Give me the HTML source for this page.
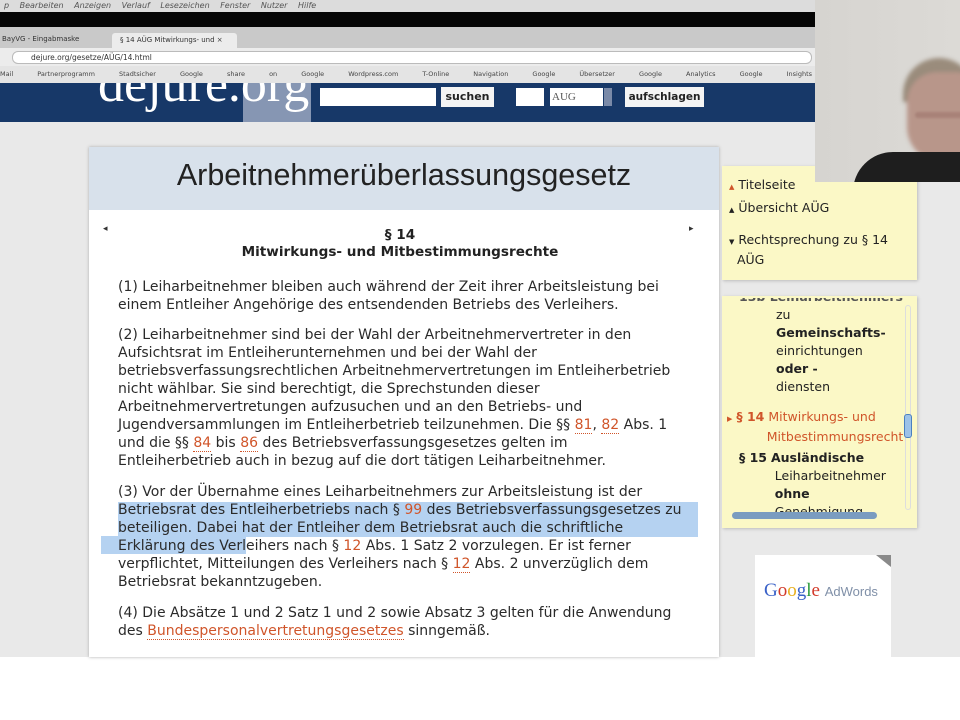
<!DOCTYPE html>
<html><head><meta charset="utf-8"><style>
*{margin:0;padding:0;box-sizing:border-box}
body{width:960px;height:720px;overflow:hidden;background:#fff;position:relative;font-family:"DejaVu Sans","Liberation Sans",sans-serif}
.a{position:absolute}
.t{position:absolute;left:118px;font-size:14px;color:#2a2a2a;white-space:nowrap;line-height:18px}
.r{color:#d0552a}
.u{color:#d0552a;border-bottom:1px dotted #d0552a}
.sb{position:absolute;font-size:12.5px;color:#222;white-space:nowrap}
</style></head><body>
<div class="a" style="left:0;top:122px;width:960px;height:535px;background:#e9e9e9"></div>
<div class="a" style="left:0;top:0;width:820px;height:12px;background:#dcdcdc;font-size:8px;color:#555;font-style:italic;line-height:12px;padding-left:4px;word-spacing:8px">p Bearbeiten Anzeigen Verlauf Lesezeichen Fenster Nutzer Hilfe</div>
<div class="a" style="left:0;top:12px;width:820px;height:15px;background:#050505"></div>
<div class="a" style="left:0;top:27px;width:820px;height:21px;background:#c9c9c9"></div>
<div class="a" style="left:0;top:35px;width:100px;height:13px;font-size:7px;color:#333;padding-left:2px">BayVG - Eingabmaske</div>
<div class="a" style="left:112px;top:33px;width:125px;height:15px;background:#ececec;border-radius:3px 3px 0 0;font-size:7px;color:#333;padding:3px 0 0 8px">§ 14 AÜG Mitwirkungs- und ×</div>
<div class="a" style="left:0;top:48px;width:820px;height:18px;background:#ececec"></div>
<div class="a" style="left:12px;top:51px;width:800px;height:13px;background:#fff;border:1px solid #bbb;border-radius:6px;font-size:7.5px;color:#333;padding-left:18px;line-height:11px">dejure.org/gesetze/AÜG/14.html</div>
<div class="a" style="left:0;top:66px;width:820px;height:17px;background:#e4e4e4;font-size:6.5px;color:#444;line-height:17px;word-spacing:22px;white-space:nowrap;overflow:hidden">Mail Partnerprogramm Stadtsicher Google share on Google Wordpress.com T-Online Navigation Google Übersetzer Google Analytics Google Insights Greasebox</div>
<div class="a" style="left:0;top:83px;width:815px;height:39px;background:#173868"></div>
<div class="a" style="left:243px;top:83px;width:68px;height:39px;background:#8696b3"></div>
<div class="a" style="left:0;top:83px;width:815px;height:39px;overflow:hidden">
<div class="a" style="left:98px;top:-24px;font-family:'Liberation Serif',serif;font-size:52px;color:#fff;line-height:52px">dejure.org</div></div>
<div class="a" style="left:320px;top:88px;width:116px;height:18px;background:#fff"></div>
<div class="a" style="left:441px;top:87px;width:53px;height:20px;background:#f4f4f4;font-size:11px;font-weight:bold;color:#222;text-align:center;line-height:20px">suchen</div>
<div class="a" style="left:516px;top:88px;width:28px;height:18px;background:#fff"></div>
<div class="a" style="left:550px;top:88px;width:53px;height:18px;background:#fff;font-size:11px;color:#555;padding-left:2px;line-height:18px;font-family:'Liberation Serif',serif">AUG</div>
<div class="a" style="left:604px;top:88px;width:8px;height:18px;background:#7a8aa8"></div>
<div class="a" style="left:625px;top:87px;width:79px;height:20px;background:#f4f4f4;font-size:10.5px;font-weight:bold;color:#222;text-align:center;line-height:20px">aufschlagen</div>
<div class="a" style="left:89px;top:147px;width:630px;height:510px;background:#fff;box-shadow:0 0 3px #aaa"></div>
<div class="a" style="left:89px;top:147px;width:630px;height:63px;background:#d8e1eb"></div>
<div class="a" style="left:89px;top:158px;width:630px;text-align:center;font-family:'Liberation Sans',sans-serif;font-size:30.5px;color:#222">Arbeitnehmerüberlassungsgesetz</div>
<div class="a" style="left:103px;top:224px;font-size:9px;color:#333">◂</div>
<div class="a" style="left:689px;top:224px;font-size:9px;color:#333">▸</div>
<div class="a" style="left:89px;top:227px;width:622px;text-align:center;font-size:13.6px;font-weight:bold;color:#222;line-height:17px">§ 14<br>Mitwirkungs- und Mitbestimmungsrechte</div>
<div class="a" style="left:118px;top:502px;width:580px;height:35px;background:#b5d2f1"></div>
<div class="a" style="left:101px;top:536px;width:145px;height:18px;background:#b5d2f1"></div>
<div class="t" style="top:278px">(1) Leiharbeitnehmer bleiben auch während der Zeit ihrer Arbeitsleistung bei</div>
<div class="t" style="top:296px">einem Entleiher Angehörige des entsendenden Betriebs des Verleihers.</div>
<div class="t" style="top:326px">(2) Leiharbeitnehmer sind bei der Wahl der Arbeitnehmervertreter in den</div>
<div class="t" style="top:344px">Aufsichtsrat im Entleiherunternehmen und bei der Wahl der</div>
<div class="t" style="top:362px">betriebsverfassungsrechtlichen Arbeitnehmervertretungen im Entleiherbetrieb</div>
<div class="t" style="top:380px">nicht wählbar. Sie sind berechtigt, die Sprechstunden dieser</div>
<div class="t" style="top:398px">Arbeitnehmervertretungen aufzusuchen und an den Betriebs- und</div>
<div class="t" style="top:416px">Jugendversammlungen im Entleiherbetrieb teilzunehmen. Die §§ <span class="u">81</span>, <span class="u">82</span> Abs. 1</div>
<div class="t" style="top:434px">und die §§ <span class="u">84</span> bis <span class="u">86</span> des Betriebsverfassungsgesetzes gelten im</div>
<div class="t" style="top:452px">Entleiherbetrieb auch in bezug auf die dort tätigen Leiharbeitnehmer.</div>
<div class="t" style="top:483px">(3) Vor der Übernahme eines Leiharbeitnehmers zur Arbeitsleistung ist der</div>
<div class="t" style="top:501px">Betriebsrat des Entleiherbetriebs nach § <span class="r">99</span> des Betriebsverfassungsgesetzes zu</div>
<div class="t" style="top:519px">beteiligen. Dabei hat der Entleiher dem Betriebsrat auch die schriftliche</div>
<div class="t" style="top:537px">Erklärung des Verleihers nach § <span class="r">12</span> Abs. 1 Satz 2 vorzulegen. Er ist ferner</div>
<div class="t" style="top:555px">verpflichtet, Mitteilungen des Verleihers nach § <span class="u">12</span> Abs. 2 unverzüglich dem</div>
<div class="t" style="top:573px">Betriebsrat bekanntzugeben.</div>
<div class="t" style="top:604px">(4) Die Absätze 1 und 2 Satz 1 und 2 sowie Absatz 3 gelten für die Anwendung</div>
<div class="t" style="top:622px">des <span class="u">Bundespersonalvertretungsgesetzes</span> sinngemäß.</div>
<div class="a" style="left:722px;top:166px;width:195px;height:114px;background:#fbf8c6;box-shadow:1px 1px 3px #bbb"></div>
<div class="sb" style="left:729px;top:177px"><span style="color:#d0552a;font-size:7px">▲</span> Titelseite</div>
<div class="sb" style="left:729px;top:200px"><span style="font-size:7px">▲</span> Übersicht AÜG</div>
<div class="sb" style="left:729px;top:231px;line-height:18px"><span style="font-size:7px">▼</span> Rechtsprechung zu § 14<br>&nbsp;&nbsp;AÜG</div>
<div class="a" style="left:722px;top:296px;width:195px;height:232px;background:#fbf8c6;box-shadow:1px 1px 3px #bbb;overflow:hidden"></div>
<div class="a" style="left:722px;top:298px;width:185px;height:218px;overflow:hidden">
<div class="sb" style="left:17px;top:-9px;font-weight:bold;color:#555">13b Leiharbeitnehmers</div>
<div class="sb" style="left:54px;top:8px;line-height:18px">zu<br><b>Gemeinschafts-</b><br>einrichtungen<br><b>oder -</b><br>diensten</div>
<div class="sb" style="left:5px;top:110px;line-height:18px;color:#d0552a"><span style="font-size:7px">▶</span> <b>§ 14</b> Mitwirkungs- und<br>&nbsp;&nbsp;&nbsp;&nbsp;&nbsp;&nbsp;&nbsp;&nbsp;&nbsp;&nbsp;Mitbestimmungsrecht</div>
<div class="sb" style="left:17px;top:151px;line-height:18px"><b>§ 15</b> <b>Ausländische</b><br>&nbsp;&nbsp;&nbsp;&nbsp;&nbsp;&nbsp;&nbsp;&nbsp;&nbsp;Leiharbeitnehmer<br>&nbsp;&nbsp;&nbsp;&nbsp;&nbsp;&nbsp;&nbsp;&nbsp;&nbsp;<b>ohne</b><br>&nbsp;&nbsp;&nbsp;&nbsp;&nbsp;&nbsp;&nbsp;&nbsp;&nbsp;Genehmigung</div>
</div>
<div class="a" style="left:905px;top:305px;width:6px;height:205px;border:1px solid #ddd;border-radius:3px"></div>
<div class="a" style="left:904px;top:414px;width:8px;height:24px;background:#9cc2e8;border:1px solid #4a80c0;border-radius:3px"></div>
<div class="a" style="left:732px;top:512px;width:145px;height:7px;background:#7a9cc0;border-radius:4px"></div>
<div class="a" style="left:755px;top:555px;width:136px;height:102px;background:#fff"></div>
<div class="a" style="left:876px;top:555px;width:15px;height:12px;background:#8a8a8a;clip-path:polygon(0 0,100% 0,100% 100%)"></div>
<div class="a" style="left:764px;top:580px;font-family:'Liberation Serif',serif;font-size:19px;white-space:nowrap"><span style="color:#3a62c8">G</span><span style="color:#d23a2a">o</span><span style="color:#e8b020">o</span><span style="color:#3a62c8">g</span><span style="color:#2a9a3a">l</span><span style="color:#d23a2a">e</span> <span style="font-family:'Liberation Sans',sans-serif;font-size:13px;color:#8090a8">AdWords</span></div>
<div class="a" style="left:815px;top:0;width:145px;height:182px;background:linear-gradient(90deg,#d6d4d0,#dcdad6);overflow:hidden">
<div class="a" style="left:88px;top:58px;width:72px;height:44px;background:#9a8c7c;border-radius:36px 36px 0 0;filter:blur(2px)"></div>
<div class="a" style="left:92px;top:72px;width:70px;height:90px;background:#b8968a;border-radius:30px 20px 30px 35px;filter:blur(2px)"></div>
<div class="a" style="left:100px;top:112px;width:50px;height:6px;background:#a88278;border-radius:4px;filter:blur(1px)"></div>
<div class="a" style="left:38px;top:152px;width:120px;height:40px;background:#1e1e1e;border-radius:40px 0 0 0"></div>
</div>
</body></html>
